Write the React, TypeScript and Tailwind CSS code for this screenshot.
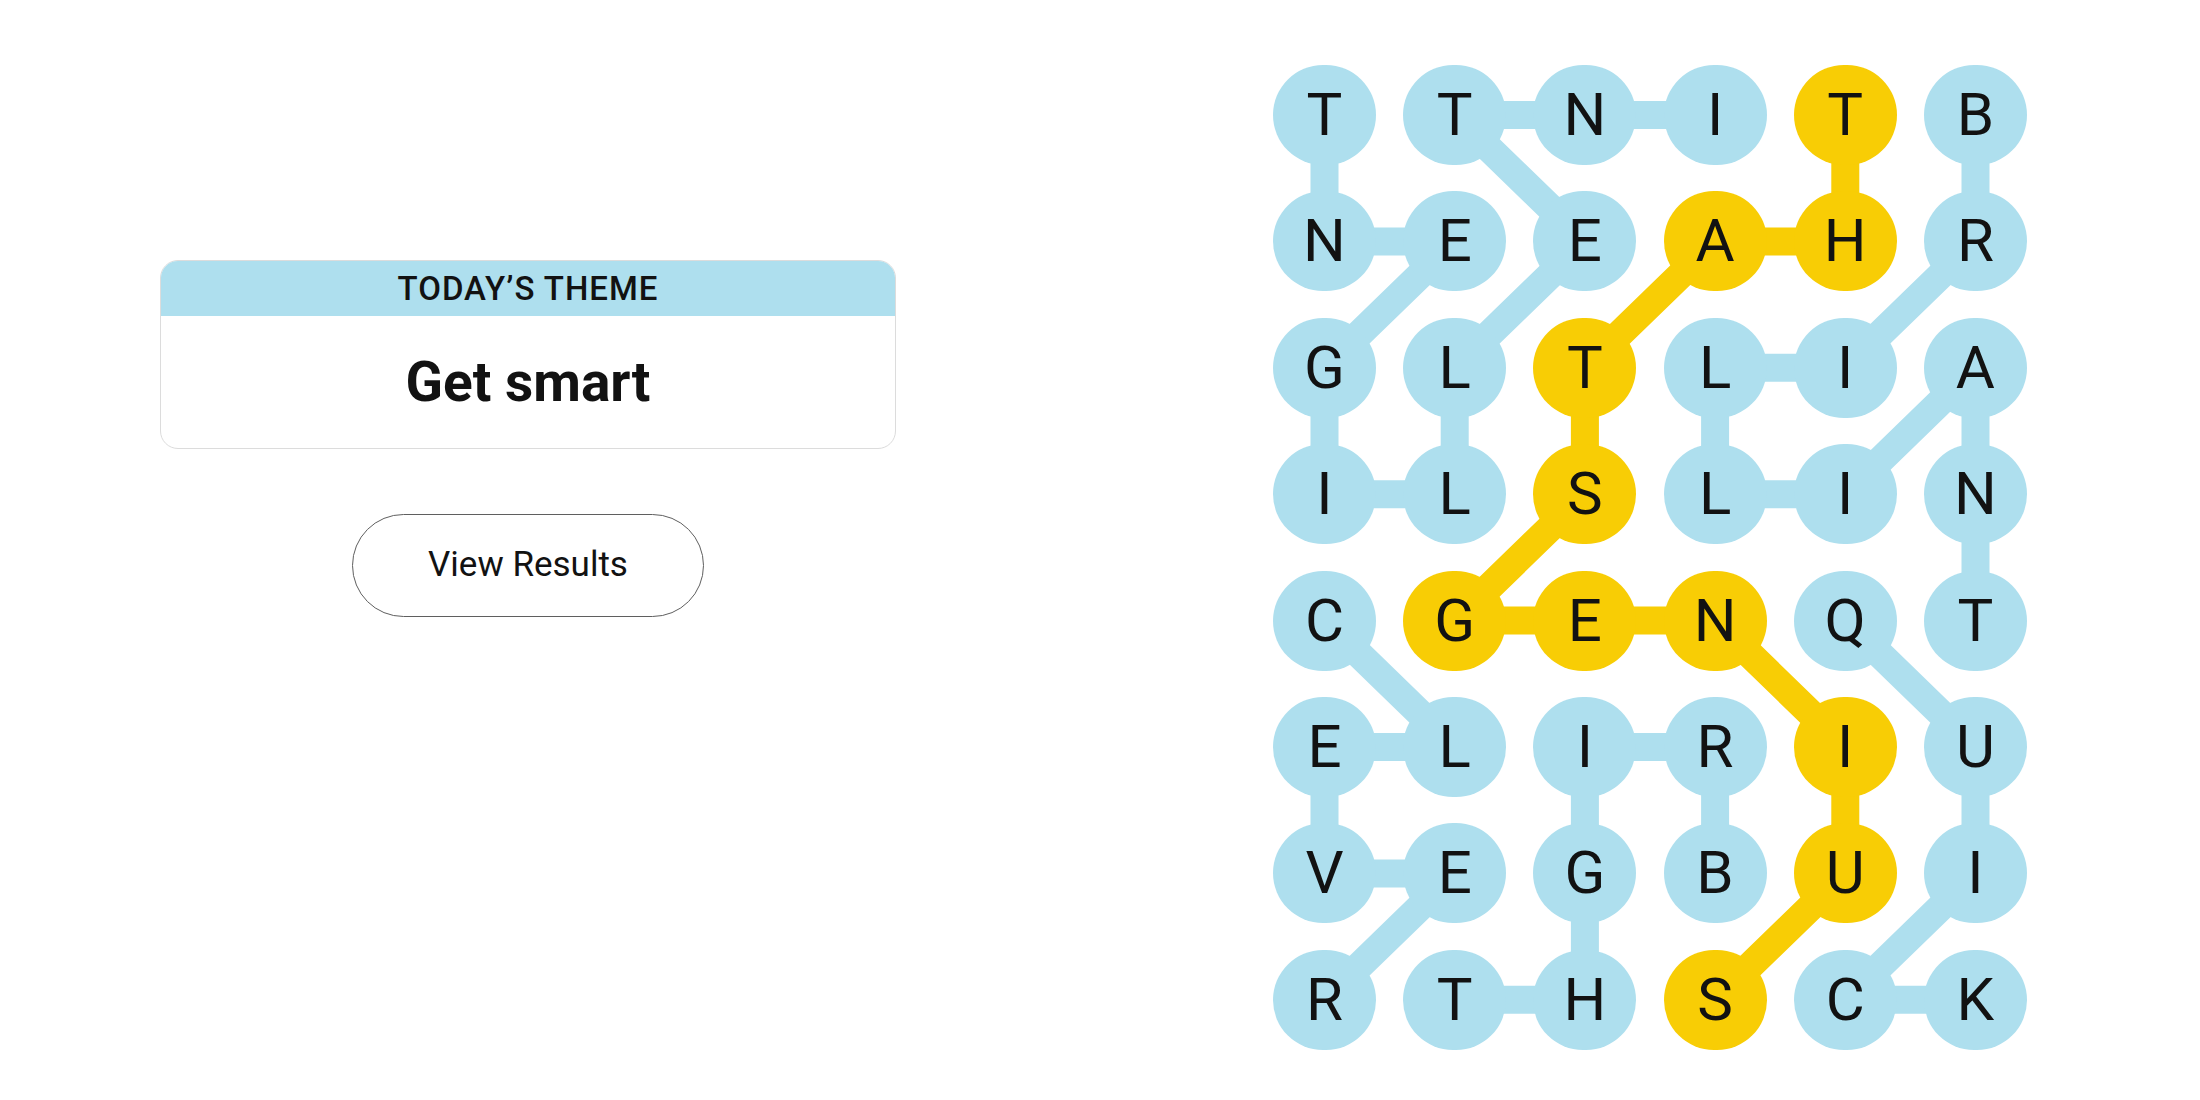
import React from "react";

const GRID = [
  "TTNITB",
  "NEEAHR",
  "GLTLIA",
  "ILSLIN",
  "CGENQT",
  "ELIRIU",
  "VEGBUI",
  "RTHSCK",
];

type Cell = [number, number];

// found words, as paths through the board (row, col)
const WORDS: { path: Cell[]; spangram?: boolean }[] = [
  { path: [[0, 3], [0, 2], [0, 1], [1, 2], [2, 1], [3, 1], [3, 0], [2, 0], [1, 1], [1, 0], [0, 0]] },
  { path: [[0, 5], [1, 5], [2, 4], [2, 3], [3, 3], [3, 4], [2, 5], [3, 5], [4, 5]] },
  { path: [[4, 4], [5, 5], [6, 5], [7, 4], [7, 5]] },
  { path: [[4, 0], [5, 1], [5, 0], [6, 0], [6, 1], [7, 0]] },
  { path: [[6, 3], [5, 3], [5, 2], [6, 2], [7, 2], [7, 1]] },
  {
    path: [[0, 4], [1, 4], [1, 3], [2, 2], [3, 2], [4, 1], [4, 2], [4, 3], [5, 4], [6, 4], [7, 3]],
    spangram: true,
  },
];

const BLUE = "#aedfee";
const YELLOW = "#f8cd05";

const COL_PITCH = 130.2;
const ROW_PITCH = 126.4;
const cx = (c: number) => 51.5 + c * COL_PITCH;
const cy = (r: number) => 50 + r * ROW_PITCH;

const spanCells = new Set(
  WORDS.filter((w) => w.spangram).flatMap((w) => w.path.map(([r, c]) => `${r}-${c}`))
);

function Board() {
  return (
    <div className="relative w-[754px] h-[985px]">
      <svg className="absolute inset-0" width="754" height="985">
        {WORDS.map((w, i) => (
          <polyline
            key={i}
            points={w.path.map(([r, c]) => `${cx(c)},${cy(r)}`).join(" ")}
            fill="none"
            stroke={w.spangram ? YELLOW : BLUE}
            strokeWidth={28}
            strokeLinejoin="round"
          />
        ))}
      </svg>
      <div className="relative grid grid-cols-[repeat(6,103px)] gap-x-[27.2px] gap-y-[26.4px]">
        {GRID.flatMap((row, r) =>
          row.split("").map((ch, c) => (
            <div
              key={`${r}-${c}`}
              className={`w-[103px] h-[100px] rounded-full flex items-center justify-center text-[60px] font-normal leading-none text-[#121212] ${
                spanCells.has(`${r}-${c}`) ? "bg-[#f8cd05]" : "bg-[#aedfee]"
              }`}
            >
              {ch}
            </div>
          ))
        )}
      </div>
    </div>
  );
}

export default function App() {
  return (
    <div className="w-[2200px] h-[1100px] bg-white flex font-['Roboto','Liberation_Sans',sans-serif]">
      <section className="w-[736px] ml-[160px] mt-[260px] flex flex-col items-center">
        <div className="w-full border border-[#dcdcdc] rounded-[18px] overflow-hidden">
          <div className="h-[55px] bg-[#aedfee] flex items-center justify-center">
            <span className="text-[33px] font-medium tracking-[1px] text-[#121212]">TODAY’S THEME</span>
          </div>
          <div className="h-[132px] flex items-center justify-center">
            <h1 className="text-[55px] font-bold text-[#121212]">Get smart</h1>
          </div>
        </div>
        <button className="mt-[65px] w-[352px] h-[103px] rounded-full border-[1.5px] border-[#5f5f5f] text-[35px] text-[#121212]">
          View Results
        </button>
      </section>
      <section className="ml-[377px] mt-[65px]">
        <Board />
      </section>
    </div>
  );
}
